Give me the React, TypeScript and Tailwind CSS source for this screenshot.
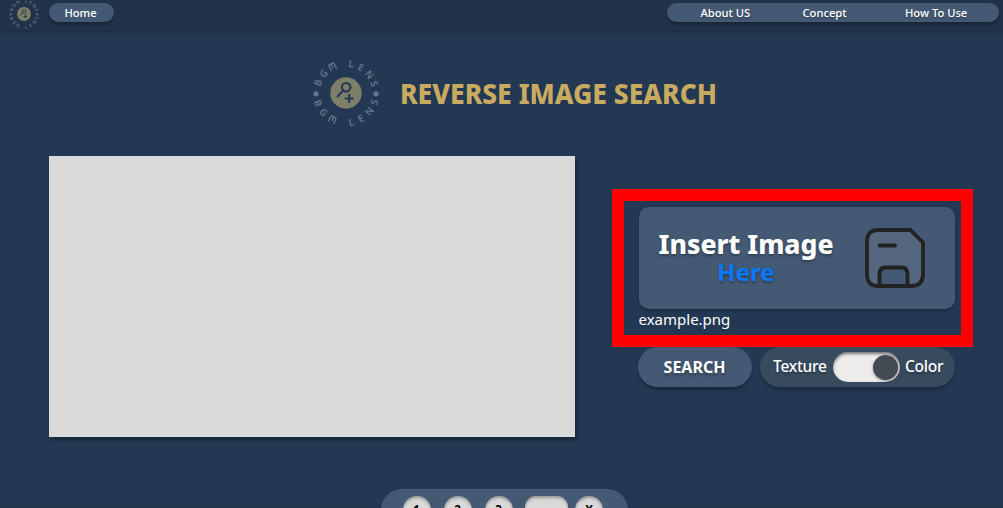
import React from "react";

const LETTERS: [string, number][] = [
  ["B", -70], ["G", -49], ["m", -27], ["L", 10], ["E", 30], ["N", 52], ["S", 72],
];

function Letter({ ch, transform }: { ch: string; transform: string }) {
  if (ch === "m") {
    return (
      <path
        transform={transform}
        d="M-2.800 3.500V-1.600Q-2.800-3.200-1.400-3.200Q0-3.200 0-1.600V1.400M0-1.600Q0-3.200 1.400-3.200Q2.800-3.200 2.800-1.600V3.500"
        fill="none"
        stroke="#66758b"
        strokeWidth="1.3"
      />
    );
  }
  return (
    <text transform={transform} y="3.5" textAnchor="middle" fontSize="9.8" fontWeight="600" fill="#66758b">
      {ch}
    </text>
  );
}

function Logo({ className }: { className: string }) {
  return (
    <svg viewBox="-34 -34 68 68" className={className + " overflow-visible"}>
      {LETTERS.map(([ch, a]) => (
        <Letter key={"t" + ch} ch={ch} transform={`rotate(${a}) translate(0 -29.700)`} />
      ))}
      {LETTERS.map(([ch, a]) => (
        <Letter key={"b" + ch} ch={ch} transform={`rotate(${-a}) translate(0 29.700)`} />
      ))}
      <circle cx="-30" cy="0.8" r="2.6" fill="#66758b" />
      <circle cx="30" cy="0.8" r="2.6" fill="#66758b" />
      <circle r="15.7" fill="#7f7f69" />
      <g fill="none" stroke="#233a56" strokeWidth="2.1">
        <circle cx="0.2" cy="-5.7" r="4.3" />
        <path d="M-2.700-2.700L-9 4M3.200 1v9M-1.300 5.500h9" />
      </g>
    </svg>
  );
}

function SaveIcon() {
  return (
    <svg viewBox="0 0 62 62" className="h-[62px] w-[62px]" strokeLinejoin="round" strokeLinecap="round">
      <path
        d="M14 3H46.500L59 15.500V47Q59 59 47 59H14Q3 59 3 47V15Q3 3 14 3Z"
        fill="#54677f"
      />
      <path d="M15.500 59V47Q15.500 40.500 22 40.500H37Q43.500 40.500 43.500 47V59Z" fill="#445973" />
      <path
        d="M14 3H46.500L59 15.500V47Q59 59 47 59H14Q3 59 3 47V15Q3 3 14 3ZM15.500 59V47Q15.500 40.500 22 40.500H37Q43.500 40.500 43.500 47V59M15.500 18.500H31"
        fill="none"
        stroke="#222"
        strokeWidth="3.8"
      />
    </svg>
  );
}

const PAGE = "h-7 w-7 shrink-0 rounded-full bg-[#d9d9d9] pt-[6px] text-center text-[11.500px] leading-[16px] font-bold text-black shadow-[inset_0_2px_3px_rgba(0,0,0,0.3)]";

export default function App() {
  return (
    <div className="flex h-[508px] w-[1003px] flex-col overflow-hidden bg-[#233953] font-['Noto_Sans',sans-serif] text-white">
      <header className="flex h-[31px] shrink-0 items-start bg-[#223349] pl-[9px] shadow-[0_2px_4px_rgba(0,0,0,0.25)]">
        <Logo className="-mt-[1px] h-[30px] w-[30px]" />
        <div className="mt-[3px] ml-[10px] flex h-[19px] w-[65px] items-center justify-center rounded-full bg-[#445973] pt-[2px] pr-[2px] text-[11.200px] font-medium shadow-[0_3px_3px_rgba(0,0,0,0.25)]">
          Home
        </div>
        <nav className="mt-[3px] mr-1 ml-auto flex h-[19px] w-[332.500px] items-center rounded-full bg-[#445973] pt-[2px] pl-[34px] text-[11.200px] font-medium shadow-[0_3px_3px_rgba(0,0,0,0.25)] [text-shadow:0_2px_2px_rgba(0,0,0,0.25)]">
          <span className="w-[102px]">About US</span>
          <span className="w-[102.500px]">Concept</span>
          <span className="whitespace-nowrap">How To Use</span>
        </nav>
      </header>

      <div className="mt-[28px] flex h-[68px] shrink-0 items-center pl-[311.500px]">
        <Logo className="h-[68px] w-[68px]" />
        <h1 className="ml-[20px] origin-left scale-x-[0.944] text-[28px] leading-[38px] font-extrabold whitespace-nowrap text-[#c9aa61]">
          REVERSE IMAGE SEARCH
        </h1>
      </div>

      <main className="mt-[29px] flex h-[281px] shrink-0 items-start pl-[49px]">
        <div className="h-[281px] w-[526px] bg-[#d9d9d9] shadow-[3px_4px_3px_rgba(0,0,0,0.25)]" />
        <div className="mt-[33px] ml-[36.500px] w-[361px]">
          <section className="h-[158px] border-[12px] border-[#ff0000] pt-[6px] pl-[15px]">
            <div className="flex h-[102px] w-[316px] items-center rounded-[10px] bg-[#445973] pl-[19px] shadow-[0_2px_3px_rgba(0,0,0,0.25)]">
              <div className="w-[177px] text-center whitespace-nowrap [text-shadow:0_2px_3px_rgba(0,0,0,0.3)]">
                <div className="text-[26.500px] leading-[28px] font-extrabold">Insert Image</div>
                <div className="text-[24px] leading-[28px] font-bold text-[#0878ff]">Here</div>
              </div>
              <div className="ml-[29px]">
                <SaveIcon />
              </div>
            </div>
            <div className="text-[15px] leading-[20px]">example.png</div>
          </section>
          <div className="flex pl-[26px]">
            <button className="h-[40px] w-[114px] rounded-full bg-[#445973] pb-px text-[16px] font-bold shadow-[0_3px_3px_rgba(0,0,0,0.25)] [text-shadow:0_3px_3px_rgba(0,0,0,0.25)]">
              SEARCH
            </button>
            <div className="ml-2 flex h-[40px] w-[195px] items-center rounded-full bg-[#374a5e] pl-[13.500px] text-[15.500px] font-medium tracking-[-0.25px] shadow-[0_3px_3px_rgba(0,0,0,0.25)] [text-shadow:0_2px_2px_rgba(0,0,0,0.25)]">
              <span className="w-[60px]">Texture</span>
              <div className="flex h-[30px] w-[67px] items-center justify-end rounded-full bg-[#eeebeb] pr-[2px] shadow-[inset_0_2px_3px_rgba(0,0,0,0.5)]">
                <div className="h-[25px] w-[25px] rounded-full bg-[#444a53] shadow-[0_1px_3px_rgba(0,0,0,0.4)]" />
              </div>
              <span className="ml-[5px]">Color</span>
            </div>
          </div>
        </div>
      </main>

      <div className="h-[71px] shrink-0 border-b-2 border-[#22334d] pt-[52px]">
        <div className="ml-[381px] flex h-[42px] w-[247px] items-start rounded-full bg-[#445973] pt-[7px] pl-[21.500px]">
          <div className={PAGE}>1</div>
          <div className={PAGE + " ml-[13px]"}>2</div>
          <div className={PAGE + " ml-[13px]"}>3</div>
          <div className="ml-[12.500px] h-7 w-[43px] rounded-[11px] bg-[#d9d9d9] shadow-[inset_0_2px_3px_rgba(0,0,0,0.3)]" />
          <div className={PAGE + " ml-[7px]"}>X</div>
        </div>
      </div>
    </div>
  );
}
